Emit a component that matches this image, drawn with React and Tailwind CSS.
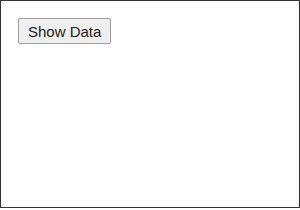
export default function App() {
  return (
    <div className="box-border h-[208px] w-[300px] border border-[#333] bg-white pl-[17px] pt-[17px] font-['Liberation_Sans',Arial,sans-serif]">
      <button className="h-[26px] rounded-[2px] border border-[#a0a0a0] bg-[#efefef] px-[9px] text-[15px] leading-none text-[#222]">
        Show Data
      </button>
    </div>
  )
}
